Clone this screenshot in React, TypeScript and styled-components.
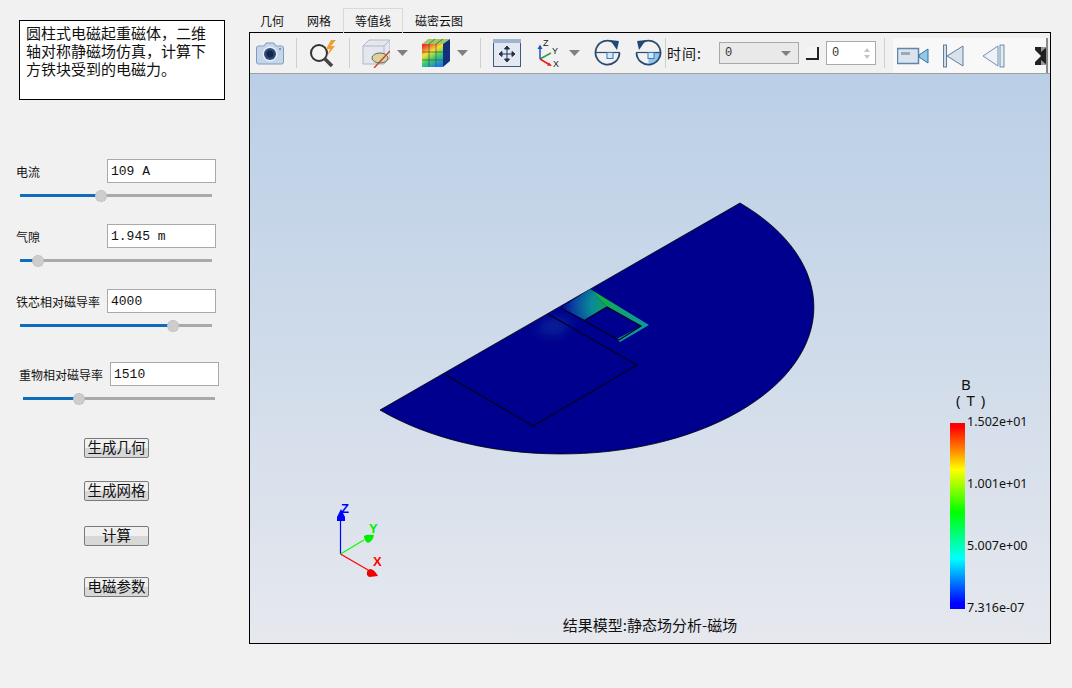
// App.tsx
import React from "react";
import styled, { createGlobalStyle } from "styled-components";

const CJK = `"Noto Sans CJK SC", "Liberation Sans", sans-serif`;
const MONO = `"Liberation Mono", "Noto Sans CJK SC", monospace`;

const GlobalStyle = createGlobalStyle`
  html, body {
    margin: 0;
    padding: 0;
    background: #f1f1f1;
  }
`;

const Page = styled.div`
  display: flex;
  width: 1072px;
  height: 688px;
  overflow: hidden;
  background: #f1f1f1;
  font-family: ${CJK};
  color: #111;
`;

/* ---------- left panel ---------- */

const Sidebar = styled.aside`
  flex: none;
  width: 249px;
  box-sizing: border-box;
  padding: 20px 0 0 16px;
`;

const Description = styled.div`
  box-sizing: border-box;
  width: 206px;
  height: 80px;
  margin: 0 0 59px 3px;
  padding: 3px 12px 0 6px;
  border: 1px solid #000;
  background: #fff;
  font-size: 15px;
  line-height: 18px;
`;

const Field = styled.div<{ $indent: number; $extra: number }>`
  height: 38px;
  margin: 0 0 ${(p) => 27 + p.$extra}px ${(p) => p.$indent}px;
`;

const FieldRow = styled.div`
  display: flex;
  align-items: center;
  height: 24px;
`;

const FieldLabel = styled.label`
  flex: none;
  width: 91px;
  font-size: 12px;
  white-space: nowrap;
`;

const FieldInput = styled.input`
  box-sizing: border-box;
  width: 109px;
  height: 24px;
  padding: 0 3px;
  border: 1px solid #a9a9a9;
  background: #fff;
  font-family: ${MONO};
  font-size: 13px;
  color: #111;
  outline: none;
`;

const Slider = styled.div`
  position: relative;
  width: 192px;
  height: 3px;
  margin: 11px 0 0 4px;
  background: #a9a9a9;
`;

const SliderFill = styled.div`
  height: 100%;
  background: #0f6cbd;
`;

const SliderThumb = styled.div`
  position: absolute;
  top: -4px;
  width: 10px;
  height: 10px;
  margin-left: -5px;
  border-radius: 50%;
  background: #cdcdcd;
  border: 1px dotted #b5b5b5;
`;

const ActionList = styled.div`
  display: flex;
  flex-direction: column;
  margin: 38px 0 0 68px;
`;

const ActionButton = styled.button<{ $top: number }>`
  box-sizing: border-box;
  width: 65px;
  height: 20px;
  margin: ${(p) => p.$top}px 0 0;
  padding: 0 0 2px;
  border: 1px solid #7a7a7a;
  border-radius: 2px;
  background: linear-gradient(#f0f0f0 0 50%, #d8d8d8 50% 100%);
  font-family: ${CJK};
  font-size: 14.5px;
  line-height: 16px;
  color: #111;
  white-space: nowrap;
`;

/* ---------- right panel ---------- */

const Main = styled.main`
  flex: none;
  width: 802px;
  padding-top: 8px;
`;

const Tabs = styled.div`
  display: flex;
  gap: 1px;
  height: 24px;
`;

const Tab = styled.div<{ $active?: boolean }>`
  box-sizing: border-box;
  height: ${(p) => (p.$active ? "25px" : "24px")};
  padding: 0 ${(p) => (p.$active ? "11px" : "10px")};
  border: 1px solid ${(p) => (p.$active ? "#d9d9d9" : "transparent")};
  border-bottom: none;
  font-size: 12px;
  line-height: 23px;
  position: relative;
  z-index: 1;
`;

const Frame = styled.div`
  box-sizing: border-box;
  width: 802px;
  height: 612px;
  border: 1px solid #000;
  display: flex;
  flex-direction: column;
`;

const Toolbar = styled.div`
  flex: none;
  display: flex;
  align-items: center;
  height: 40px;
  border-bottom: 1px solid #a0a0a0;
  overflow: hidden;
`;

const ToolIcon = styled.svg<{ $gap: number }>`
  flex: none;
  margin-left: ${(p) => p.$gap}px;
`;

const ToolSeparator = styled.div<{ $gap: number }>`
  flex: none;
  width: 1px;
  height: 30px;
  margin-left: ${(p) => p.$gap}px;
  background: #cfcfcf;
`;

const TimeLabel = styled.span`
  flex: none;
  width: 52px;
  margin-left: 1px;
  font-size: 14px;
  letter-spacing: 1px;
`;

const Combo = styled.div`
  flex: none;
  box-sizing: border-box;
  display: flex;
  align-items: center;
  justify-content: space-between;
  width: 80px;
  height: 22px;
  padding: 0 7px 0 5px;
  border: 1px solid #a9a9a9;
  background: #e9e9e9;
  font-family: ${MONO};
  font-size: 12px;
  color: #333;
`;

const Caret = styled.span`
  width: 0;
  height: 0;
  border-left: 5px solid transparent;
  border-right: 5px solid transparent;
  border-top: 5px solid #808080;
`;

const CheckBox = styled.span`
  flex: none;
  box-sizing: border-box;
  width: 13px;
  height: 13px;
  margin-left: 7px;
  border-right: 2px solid #222;
  border-bottom: 2px solid #222;
  background: #f4f4f4;
`;

const SpinBox = styled.div`
  flex: none;
  box-sizing: border-box;
  display: flex;
  align-items: center;
  justify-content: space-between;
  width: 50px;
  height: 24px;
  margin-left: 7px;
  padding: 0 5px;
  border: 1px solid #a9a9a9;
  background: #fff;
  font-family: ${MONO};
  font-size: 12px;
  color: #333;
`;

const SpinArrows = styled.span`
  display: flex;
  flex-direction: column;
  gap: 3px;
`;

const SpinUp = styled.i`
  display: block;
  width: 0;
  height: 0;
  border-left: 3px solid transparent;
  border-right: 3px solid transparent;
  border-bottom: 4px solid #c4c4c4;
`;

const SpinDown = styled(SpinUp)`
  border-bottom: none;
  border-top: 4px solid #c4c4c4;
`;

const PlayerBar = styled.div`
  flex: none;
  display: flex;
  align-items: center;
  width: 155px;
  height: 36px;
  margin: 0 0 -1px 8px;
  align-self: flex-end;
  overflow: hidden;
  background: #f8f8f8;
  border-right: 2px solid #8a8a8a;
  border-bottom: 1px solid #8a8a8a;
  box-sizing: border-box;
`;

const Viewport = styled.div`
  position: relative;
  flex: 1;
  overflow: hidden;
  background: linear-gradient(#bacfe6, #e6e8ee);
`;

const Scene = styled.svg`
  display: block;
`;

const ModelCaption = styled.div`
  position: absolute;
  left: 0;
  right: 0;
  top: 541px;
  text-align: center;
  font-size: 15px;
  line-height: 20px;
  color: #111;
`;

const Legend = styled.div`
  position: absolute;
  left: 700px;
  top: 302px;
`;

const LegendTitle = styled.div`
  font-family: "Noto Sans", "Liberation Sans", sans-serif;
  font-size: 15px;
  line-height: 16px;
  letter-spacing: 1px;
  margin-left: 6px;
  white-space: pre;
  height: 47px;
  color: #111;
`;

const LegendBody = styled.div`
  display: flex;
  height: 186px;
`;

const LegendBar = styled.div`
  width: 15px;
  background: linear-gradient(
    #ff0000 2%,
    #ff8000 14%,
    #ffff00 25%,
    #00ff00 48%,
    #00ffff 73%,
    #0000ff 97%
  );
`;

const LegendScale = styled.div`
  display: flex;
  flex-direction: column;
  justify-content: space-between;
  margin: -9px 0 -7px 2px;
  font-family: "Noto Sans", "Liberation Sans", sans-serif;
  font-size: 12.5px;
  line-height: 16px;
  color: #111;
`;

/* ---------- toolbar drawings ---------- */

const CameraIcon = () => (
  <ToolIcon $gap={6} width="28" height="26" viewBox="0 0 28 26">
    <path
      d="M2.500 6H8l2-3h8l2 3h5.500q2 0 2 2v14q0 2-2 2h-23q-2 0-2-2V8q0-2 2-2z"
      fill="#c5d6ea"
      stroke="#7f9cc0"
    />
    <circle cx="14" cy="14" r="7.500" fill="#e8eef6" />
    <circle cx="14" cy="14" r="6" fill="#2c4a78" />
    <circle cx="14" cy="14" r="3.500" fill="#16284a" />
    <circle cx="24" cy="9" r="1" fill="#5f7fa8" />
  </ToolIcon>
);

const SearchFlashIcon = () => (
  <ToolIcon $gap={12} width="30" height="28" viewBox="0 0 30 28">
    <circle cx="10" cy="14" r="8" fill="#f4f4f4" stroke="#333" strokeWidth="2" />
    <path d="M16 20l7 7" stroke="#444" strokeWidth="3.500" />
    <path d="M22 1l-5 9h4l-3 7 8-10h-4l5-6z" fill="#f0a030" />
  </ToolIcon>
);

const HideCubeIcon = () => (
  <ToolIcon $gap={12} width="28" height="30" viewBox="0 0 28 30">
    <path d="M1 8l6-6h21v18l-6 6H1z" fill="#e4e8ee" stroke="#b0b8c4" />
    <path d="M1 8h21v18M22 8l6-6" fill="none" stroke="#b0b8c4" />
    <ellipse cx="18" cy="20" rx="8" ry="5" fill="#dcd29a" stroke="#666" />
    <path d="M12 30L28 13" stroke="#c2492c" strokeWidth="1.500" />
  </ToolIcon>
);

const ColorCubeIcon = () => (
  <ToolIcon $gap={14} width="28" height="29" viewBox="0 0 28 29">
    <defs>
      <linearGradient id="cubeFront" x1="0.2" y1="0" x2="0.7" y2="1">
        <stop offset="0" stopColor="#ee3030" />
        <stop offset="0.35" stopColor="#f6e030" />
        <stop offset="0.65" stopColor="#30d070" />
        <stop offset="1" stopColor="#1c7ce8" />
      </linearGradient>
    </defs>
    <path d="M0 5h21v23H0z" fill="url(#cubeFront)" />
    <path d="M0 5l6-5h22l-7 5z" fill="#9fca60" />
    <path d="M21 5l7-5v22l-7 6z" fill="#12307c" />
    <path d="M7 5v23M14 5v23M0 13h21M0 21h21M7 5l6-5M14 5l7-5" stroke="#4a4a4a" strokeWidth="0.7" />
  </ToolIcon>
);

const MoveIcon = () => (
  <ToolIcon $gap={12} width="28" height="28" viewBox="0 0 28 28">
    <rect x="0.500" y="0.500" width="27" height="27" fill="#e4e8f0" stroke="#3d5a84" />
    <rect x="0" y="0" width="28" height="4" fill="#9fb4d0" />
    <path
      d="M14 8v14M7 15h14M14 7l-2.500 3h5zM14 23l-2.500-3h5zM6 15l3-2.500v5zM22 15l-3-2.500v5z"
      stroke="#1f3350"
      fill="#1f3350"
    />
  </ToolIcon>
);

const AxesIcon = () => (
  <ToolIcon $gap={16} width="24" height="30" viewBox="0 0 24 30">
    <path d="M3 21V9" stroke="#1f50c0" strokeWidth="1.500" />
    <path d="M3 6.500L0.500 11h5z" fill="#1f50c0" />
    <path d="M3 21l11-6" stroke="#30a040" strokeWidth="1.500" />
    <path d="M3 21l10 6" stroke="#e02020" strokeWidth="1.500" />
    <path d="M15 28l-5-0.500 2-3z" fill="#e02020" />
    <g fontSize="9" fontFamily="Liberation Sans" fill="#222">
      <text x="6" y="8">Z</text>
      <text x="15" y="16">Y</text>
      <text x="16" y="29">X</text>
    </g>
  </ToolIcon>
);

const RotateIcon: React.FC<{ $gap: number; mirror?: boolean }> = ({ $gap, mirror }) => (
  <ToolIcon $gap={$gap} width="27" height="28" viewBox="0 0 27 28">
    {mirror && <path d="M13.500 13.500H26A12.500 12.500 0 0 1 13.500 26z" fill="#8ec4ee" />}
    <path d="M1 13.500H26" stroke="#2a4a70" strokeWidth="1.200" />
    <rect x="13" y="13.500" width="6" height="6" fill="#d8e8f6" stroke="#3a78b8" />
    <g transform={mirror ? "translate(27 0) scale(-1 1)" : undefined}>
      <path d="M20 3.500A12 12 0 1 0 25.500 14" fill="none" stroke="#2a4a70" strokeWidth="1.800" />
      <path d="M16 1l9 1-2 9z" fill="#1f4a78" />
    </g>
  </ToolIcon>
);

const DropArrow: React.FC<{ $gap: number }> = ({ $gap }) => (
  <ToolIcon $gap={$gap} width="11" height="6" viewBox="0 0 11 6">
    <path d="M0 0h11L5.500 6z" fill="#808080" />
  </ToolIcon>
);

const VideoIcon = () => (
  <ToolIcon $gap={4} width="32" height="20" viewBox="0 0 32 20">
    <rect x="0.500" y="2.500" width="21" height="15" fill="#dbe3ec" stroke="#5f86ac" strokeWidth="1.500" />
    <rect x="4" y="6" width="9" height="3" fill="#9aaabc" />
    <path d="M22 9l9-6v14l-9-6z" fill="#8fc8e8" stroke="#3f6c98" />
  </ToolIcon>
);

const FirstFrameIcon = () => (
  <ToolIcon $gap={14} width="21" height="24" viewBox="0 0 21 24">
    <rect x="0.500" y="1" width="3" height="22" fill="#d4dee8" stroke="#5f7f9f" />
    <path d="M4 12L20 2v20z" fill="#d9e1ea" stroke="#5f7f9f" />
  </ToolIcon>
);

const PrevFrameIcon = () => (
  <ToolIcon $gap={18} width="23" height="24" viewBox="0 0 23 24">
    <path d="M1 12L16 2v20z" fill="#eef2f6" stroke="#6f8faf" />
    <rect x="18" y="1" width="4" height="22" fill="#e4eaf0" stroke="#6f8faf" />
  </ToolIcon>
);

const PlayerCutIcon = () => (
  <ToolIcon $gap={30} width="12" height="18" viewBox="0 0 12 18">
    <path d="M0 0h12v18H0z" fill="#222" />
    <path d="M0 3l6 6-6 6z" fill="#f8f8f8" />
    <path d="M12 0L6 5V0zM12 18l-6-5v5z" fill="#999" />
  </ToolIcon>
);

/* ---------- 3D model ---------- */

const DISC =
  "M380 409L740 202C838.900 260 838.400 353.300 739 410.500C639.600 467.700 478.900 467 380 409Z";

const ModelScene = () => (
  // viewBox uses screenshot coordinates so the model can be read off directly
  <Scene width="800" height="570" viewBox="250 73 800 570">
    <defs>
      <radialGradient id="gapField" cx="608" cy="304" r="48" gradientUnits="userSpaceOnUse">
        <stop offset="0" stopColor="#10a060" />
        <stop offset="0.35" stopColor="#0a8a98" />
        <stop offset="0.75" stopColor="#0a3ca0" />
        <stop offset="1" stopColor="#00008e" />
      </radialGradient>
      <linearGradient id="shellField" x1="604" y1="296" x2="640" y2="338" gradientUnits="userSpaceOnUse">
        <stop offset="0" stopColor="#10b040" />
        <stop offset="0.4" stopColor="#10a078" />
        <stop offset="1" stopColor="#0a98a8" />
      </linearGradient>
      <filter id="leakBlur" x="-50%" y="-50%" width="200%" height="200%">
        <feGaussianBlur stdDeviation="6" />
      </filter>
      <clipPath id="discClip">
        <path d={DISC} />
      </clipPath>
    </defs>
    <path d={DISC} fill="#00008e" stroke="#000" strokeWidth="0.800" />
    <g clipPath="url(#discClip)">
      <path d="M545 318L575 316L560 335L535 332Z" fill="#0a3ca0" opacity="0.55" filter="url(#leakBlur)" />
    </g>
    <path d="M561 307L590 288L607 306L585 319Z" fill="url(#gapField)" />
    <path d="M590 288L649 324L620 341L617 338L641 325L607 306Z" fill="url(#shellField)" />
    <g fill="none" stroke="#03031c" strokeWidth="1.200">
      <path d="M446 374L533 425L637 364L548 313" />
      <path d="M561 307L619 339" />
      <path d="M585 319L607 306L641 325L619 339" />
    </g>
    {/* triad */}
    <path d="M340.500 553V516" stroke="#0000ff" strokeWidth="1.200" />
    <path d="M340.500 553L364 539" stroke="#00ff00" strokeWidth="1.200" />
    <path d="M340.500 553L368 569" stroke="#ff0000" strokeWidth="1.200" />
    <path d="M341 508l-4 8v4h8v-4z" fill="#0000ff" />
    <path d="M374 534q-8-1-10 1q0 5 4 7q5-2 6-8z" fill="#00ee00" />
    <path d="M378 575q-4-7-8-7q-4 1-3 6l2 2z" fill="#ee0000" />
    <g fontFamily="Liberation Sans" fontWeight="700" fontSize="13">
      <text x="341" y="512" fill="#0000ff">Z</text>
      <text x="369" y="532" fill="#00ee00">Y</text>
      <text x="373" y="565" fill="#ff0000">X</text>
    </g>
  </Scene>
);

const FIELDS = [
  { label: "电流", value: "109 A", percent: 41.7, indent: 0, extra: 0 },
  { label: "气隙", value: "1.945 m", percent: 8.9, indent: 0, extra: 0 },
  { label: "铁芯相对磁导率", value: "4000", percent: 79.2, indent: 0, extra: 8 },
  { label: "重物相对磁导率", value: "1510", percent: 28.6, indent: 3, extra: 0 },
];

const ACTIONS = [
  { label: "生成几何", top: 0 },
  { label: "生成网格", top: 23 },
  { label: "计算", top: 25 },
  { label: "电磁参数", top: 31 },
];

const TABS = ["几何", "网格", "等值线", "磁密云图"];

const App: React.FC = () => {
  return (
    <Page>
      <GlobalStyle />
      <Sidebar>
        <Description>圆柱式电磁起重磁体，二维轴对称静磁场仿真，计算下方铁块受到的电磁力。</Description>
        {FIELDS.map((f) => (
          <Field key={f.label} $indent={f.indent} $extra={f.extra}>
            <FieldRow>
              <FieldLabel>{f.label}</FieldLabel>
              <FieldInput readOnly value={f.value} />
            </FieldRow>
            <Slider>
              <SliderFill style={{ width: `${f.percent}%` }} />
              <SliderThumb style={{ left: `${f.percent}%` }} />
            </Slider>
          </Field>
        ))}
        <ActionList>
          {ACTIONS.map((a) => (
            <ActionButton key={a.label} $top={a.top}>
              {a.label}
            </ActionButton>
          ))}
        </ActionList>
      </Sidebar>
      <Main>
        <Tabs>
          {TABS.map((t) => (
            <Tab key={t} $active={t === "等值线"}>
              {t}
            </Tab>
          ))}
        </Tabs>
        <Frame>
          <Toolbar>
            <CameraIcon />
            <ToolSeparator $gap={12} />
            <SearchFlashIcon />
            <ToolSeparator $gap={10} />
            <HideCubeIcon />
            <DropArrow $gap={7} />
            <ColorCubeIcon />
            <DropArrow $gap={7} />
            <ToolSeparator $gap={12} />
            <MoveIcon />
            <AxesIcon />
            <DropArrow $gap={8} />
            <RotateIcon $gap={14} />
            <RotateIcon $gap={14} mirror />
            <ToolSeparator $gap={3} />
            <TimeLabel>时间:</TimeLabel>
            <Combo>
              0
              <Caret />
            </Combo>
            <CheckBox />
            <SpinBox>
              0
              <SpinArrows>
                <SpinUp />
                <SpinDown />
              </SpinArrows>
            </SpinBox>
            <ToolSeparator $gap={8} />
            <PlayerBar>
              <VideoIcon />
              <FirstFrameIcon />
              <PrevFrameIcon />
              <PlayerCutIcon />
            </PlayerBar>
          </Toolbar>
          <Viewport>
            <ModelScene />
            <ModelCaption>结果模型:静态场分析-磁场</ModelCaption>
            <Legend>
              <LegendTitle>{" B\n( T )"}</LegendTitle>
              <LegendBody>
                <LegendBar />
                <LegendScale>
                  <span>1.502e+01</span>
                  <span>1.001e+01</span>
                  <span>5.007e+00</span>
                  <span>7.316e-07</span>
                </LegendScale>
              </LegendBody>
            </Legend>
          </Viewport>
        </Frame>
      </Main>
    </Page>
  );
};

export default App;
